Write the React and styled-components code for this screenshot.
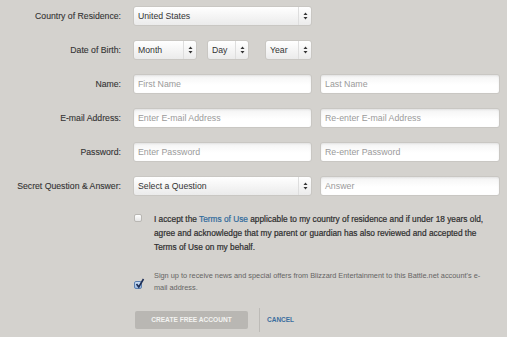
import React from "react";
import styled, { createGlobalStyle } from "styled-components";

const Global = createGlobalStyle`
  html, body { margin: 0; padding: 0; background: #d4d2ce; }
  body { font-family: "Liberation Sans", Arial, sans-serif; }
`;

const Page = styled.div`
  width: 507px;
  height: 337px;
  background: #d4d2ce;
  padding-top: 6px;
  box-sizing: border-box;
  overflow: hidden;
`;

const Form = styled.div`
  display: grid;
  grid-template-columns: 121px 1fr;
  column-gap: 12px;
  row-gap: 14px;
  align-items: center;
  width: 500px;
`;

const Label = styled.label`
  text-align: right;
  font-size: 8.7px;
  color: #333;
  white-space: nowrap;
  -webkit-text-stroke: 0.1px #333;
`;

const Fields = styled.div`
  display: flex;
  align-items: center;
  gap: ${(p) => p.$gap ?? 8}px;
  height: 20px;
`;

const Control = `
  box-sizing: border-box;
  height: 20px;
  border: 1px solid #c9c7c3;
  border-radius: 3px;
  font-family: "Liberation Sans", Arial, sans-serif;
  display: flex;
  align-items: center;
  padding-left: 4px;
`;

const Input = styled.div`
  ${Control}
  width: ${(p) => p.$w}px;
  font-size: 8.8px;
  background: linear-gradient(#f4f4f4, #ffffff 55%);
  box-shadow: inset 0 1px 2px rgba(0,0,0,0.08);
  color: #9a9a9a;
`;

const Select = styled.div`
  ${Control}
  width: ${(p) => p.$w}px;
  font-size: 8.7px;
  background: linear-gradient(#ffffff, #ebebeb);
  color: #333;
  padding-right: 0;
`;

const SelectText = styled.span`
  flex: 1;
`;

const ArrowBox = styled.span`
  width: 12px;
  height: 100%;
  border-left: 1px solid #dedede;
  display: flex;
  align-items: center;
  justify-content: center;
`;

const Arrows = () => (
  <svg width="5" height="8" viewBox="0 0 5 8">
    <path d="M2.5 0.5 L4.5 3 L0.5 3 Z" fill="#333" />
    <path d="M2.5 7.5 L4.5 5 L0.5 5 Z" fill="#333" />
  </svg>
);

const Sel = ({ w, children }) => (
  <Select $w={w}>
    <SelectText>{children}</SelectText>
    <ArrowBox>
      <Arrows />
    </ArrowBox>
  </Select>
);

const Spacer = styled.span`
  flex: none;
  width: ${(p) => p.$w}px;
`;

const CheckRow = styled.div`
  grid-column: 2;
  display: flex;
  align-items: flex-start;
  gap: 12px;
  padding-left: 1px;
  margin-top: ${(p) => p.$mt}px;
`;

const Box = styled.span`
  flex: none;
  box-sizing: border-box;
  width: 8px;
  height: 8px;
  margin-top: ${(p) => p.$mt}px;
  border: 1px solid ${(p) => (p.$checked ? "#5a7fb0" : "#b9b7b3")};
  border-radius: 2px;
  background: ${(p) => (p.$checked ? "linear-gradient(#c9dcf3, #9ebde4)" : "linear-gradient(#ffffff, #e6e6e6)")};
  position: relative;
`;

const TickSvg = styled.svg`
  position: absolute;
  left: 0;
  top: -4px;
`;

const Tick = () => (
  <TickSvg width="10" height="11" viewBox="0 0 10 11">
    <path d="M1.5 6 L3.8 9 L8.5 1" stroke="#1d2e55" strokeWidth="1.6" fill="none" />
  </TickSvg>
);

const Terms = styled.p`
  margin: 0;
  width: 342px;
  font-size: 8.3px;
  line-height: 14px;
  color: #2e2e2e;
  -webkit-text-stroke: 0.2px #2e2e2e;
`;

const TermsLink = styled.a`
  color: #2f6a9c;
  -webkit-text-stroke: 0.2px #2f6a9c;
  text-decoration: none;
`;

const News = styled.p`
  margin: 0;
  width: 345px;
  font-size: 7.35px;
  line-height: 12.5px;
  color: #646464;
`;

const Actions = styled.div`
  grid-column: 2;
  display: flex;
  align-items: center;
  padding-left: 2px;
  margin-top: -1px;
`;

const Button = styled.div`
  width: 113px;
  height: 18px;
  background: #b9b7b3;
  border-radius: 2px;
  color: #f3f3f1;
  font-size: 6.6px;
  font-weight: bold;
  display: flex;
  align-items: center;
  justify-content: center;
`;

const Divider = styled.span`
  width: 1px;
  height: 24px;
  background: #bdbbb7;
  margin: 0 7px 0 11px;
`;

const Cancel = styled.a`
  color: #3a6e9e;
  font-size: 6.5px;
  font-weight: bold;
  text-decoration: none;
`;

export default function App() {
  return (
    <Page>
      <Global />
      <Form>
        <Label>Country of Residence:</Label>
        <Fields>
          <Sel w={179}>United States</Sel>
        </Fields>

        <Label>Date of Birth:</Label>
        <Fields $gap={0}>
          <Sel w={64}>Month</Sel>
          <Spacer $w={10} />
          <Sel w={42}>Day</Sel>
          <Spacer $w={16} />
          <Sel w={47}>Year</Sel>
        </Fields>

        <Label>Name:</Label>
        <Fields>
          <Input $w={179}>First Name</Input>
          <Input $w={180}>Last Name</Input>
        </Fields>

        <Label>E-mail Address:</Label>
        <Fields>
          <Input $w={179}>Enter E-mail Address</Input>
          <Input $w={180}>Re-enter E-mail Address</Input>
        </Fields>

        <Label>Password:</Label>
        <Fields>
          <Input $w={179}>Enter Password</Input>
          <Input $w={180}>Re-enter Password</Input>
        </Fields>

        <Label>Secret Question &amp; Answer:</Label>
        <Fields>
          <Sel w={179}>Select a Question</Sel>
          <Input $w={180}>Answer</Input>
        </Fields>

        <CheckRow $mt={2}>
          <Box $mt={2} />
          <Terms>
            I accept the <TermsLink href="#">Terms of Use</TermsLink> applicable to my country of residence and if under 18 years old,
            agree and acknowledge that my parent or guardian has also reviewed and accepted the Terms of Use on my behalf.
          </Terms>
        </CheckRow>

        <CheckRow $mt={1.5}>
          <Box $checked $mt={11}>
            <Tick />
          </Box>
          <News>
            Sign up to receive news and special offers from Blizzard Entertainment to this Battle.net account's e-
            <br />
            mail address.
          </News>
        </CheckRow>

        <Actions>
          <Button>CREATE FREE ACCOUNT</Button>
          <Divider />
          <Cancel href="#">CANCEL</Cancel>
        </Actions>
      </Form>
    </Page>
  );
}
